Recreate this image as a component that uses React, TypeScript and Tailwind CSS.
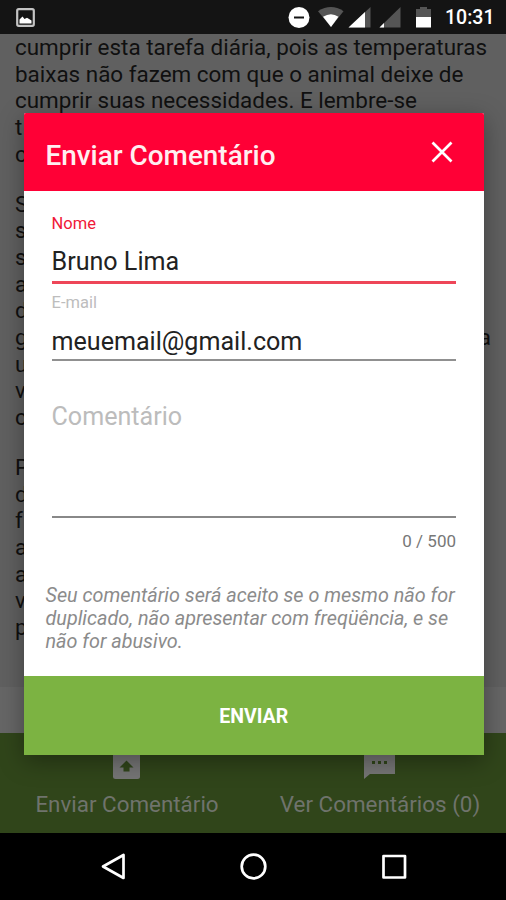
import React from "react";

const opening = [
  "cumprir esta tarefa diária, pois as temperaturas",
  "baixas não fazem com que o animal deixe de",
  "cumprir suas necessidades. E lembre-se",
  "t",
  "c",
];
const middle = ["S", "s", "s", "a", "d", "g", "u", "v", "c"];
const ending = ["P", "d", "f", "a", "a", "v", "p"];

function Paragraph({ lines, trailing }: { lines: string[]; trailing?: number }) {
  return (
    <div className="mb-[23.5px]">
      {lines.map((line, i) => (
        <div key={i} className="flex h-[26.65px] items-center justify-between whitespace-nowrap leading-none">
          <span>{line}</span>
          {i === trailing && <span>a</span>}
        </div>
      ))}
    </div>
  );
}

function StatusBar() {
  return (
    <header className="flex h-[34px] shrink-0 items-center justify-between bg-[#141414] pr-[11.5px] pl-[16px]">
      <svg width="19" height="19" viewBox="0 0 19 19">
        <rect x="1.2" y="1.2" width="16.6" height="16.6" rx="1.5" fill="none" stroke="#c4c4c4" strokeWidth="2.2" />
        <path d="M3.5 15.5V11.5L6.5 8.5L8.5 11L11 9.8L15.5 12.5V15.5Z" fill="#fff" />
      </svg>
      <div className="flex items-center">
        <svg width="130" height="24" viewBox="0 0 130 24">
          <circle cx="11" cy="12.5" r="10.5" fill="#fff" />
          <rect x="6" y="11.5" width="10" height="2" fill="#141414" />
          <path d="M30 6.2Q43 -2 55.5 6.2L43 22Z" fill="#555" />
          <path d="M35 11.8Q43 6.5 50.5 11.8L43 22Z" fill="#fff" />
          <path d="M60.5 22.5L82.5 2V22.5Z" fill="#555" />
          <path d="M60.5 22.5L77 7V22.5Z" fill="#fff" />
          <path d="M91.5 22.5L112.5 2V22.5Z" fill="#555" />
          <path d="M91.5 22.5L96 18V22.5Z" fill="#fff" />
        </svg>
        <svg width="15" height="24" viewBox="0 0 15 24" className="-ml-[2px]">
          <path d="M0 4H4V2H11V4H15V12H0Z" fill="#555" />
          <rect y="12" width="15" height="10.5" fill="#fff" />
        </svg>
        <span className="ml-[14px] pt-[1px] text-[19.5px] leading-none font-medium text-white">10:31</span>
      </div>
    </header>
  );
}

function Field({ label, value, active }: { label: string; value: string; active?: boolean }) {
  return (
    <label className="block h-[79px]">
      <span className={"block h-[20px] text-[16.5px] leading-[20px] " + (active ? "text-[#f01838]" : "text-[#bdbdbd]")}>{label}</span>
      <span
        className={
          "flex items-center text-[25.1px] leading-none text-[#222] " +
          (active ? "h-[50px] border-b-[3px] border-[#ee4658] pt-[10px]" : "h-[48.5px] border-b-2 border-[#909090] pt-[11px]")
        }
      >
        {value}
      </span>
    </label>
  );
}

function Dialog() {
  return (
    <section className="absolute top-[112.5px] left-[23.5px] flex h-[642px] w-[460.5px] flex-col overflow-hidden rounded-t-[2px] bg-white shadow-[0_6px_24px_rgba(0,0,0,0.35)]">
      <header className="flex h-[78px] shrink-0 items-center justify-between bg-[#ff0036] pr-[31px] pl-[22px] text-white">
        <h1 className="pt-[8px] text-[27.9px] leading-none font-medium text-[#ffeef0]">Enviar Comentário</h1>
        <svg width="22" height="22" viewBox="0 0 22 22" stroke="#fff" strokeWidth="2.7">
          <path d="M1.5 1.5L20.5 20.5M20.5 1.5L1.5 20.5" />
        </svg>
      </header>
      <form className="flex flex-1 flex-col px-[28px] pt-[23px]">
        <Field label="Nome" value="Bruno Lima" active />
        <Field label="E-mail" value="meuemail@gmail.com" />
        <div className="h-[146px] border-b-2 border-[#888] pt-[32px] text-[25.1px] leading-none text-[#bcbcbc]">
          <span className="block">Comentário</span>
        </div>
        <p className="pt-[13px] text-right text-[17px] leading-[20px] text-[#777]">0 / 500</p>
        <p className="mt-[33px] -ml-[6px] text-[19.8px] leading-[23px] whitespace-nowrap text-[#8b8b8b] italic">
          Seu comentário será aceito se o mesmo não for
          <br />
          duplicado, não apresentar com freqüência, e se
          <br />
          não for abusivo.
        </p>
      </form>
      <button type="button" className="h-[78.5px] shrink-0 bg-[#7cb342] pt-[2px] text-[19.5px] font-bold text-white">
        ENVIAR
      </button>
    </section>
  );
}

export default function App() {
  return (
    <div className="relative flex h-[900px] w-[506px] flex-col overflow-hidden bg-black font-['Roboto',sans-serif]">
      <StatusBar />
      <main className="flex h-[699px] shrink-0 flex-col bg-[#606060] text-[22.45px] text-[#101010]">
        <article className="h-[653px] shrink-0 px-[15px]">
          <Paragraph lines={opening} />
          <Paragraph lines={middle} trailing={5} />
          <Paragraph lines={ending} />
        </article>
        <div className="flex-1 bg-[#666]" />
      </main>
      <nav className="flex h-[100px] shrink-0 bg-[#30451a] text-[22.4px] text-[#6f736c]">
        <div className="flex w-[254px] flex-col items-center pt-[17.5px]">
          <svg width="27" height="28" viewBox="0 0 27 28" className="mr-[1px]">
            <rect width="27" height="28" rx="2.5" fill="#757575" />
            <path d="M13.5 9.5L20.5 16.5H16.5V20.5H10.5V16.5H6.5Z" fill="#30451a" />
          </svg>
          <span className="mt-[14px] leading-none whitespace-nowrap">Enviar Comentário</span>
        </div>
        <div className="flex w-[252px] flex-col items-center pt-[17.5px]">
          <svg width="31" height="28" viewBox="0 0 31 28" className="mr-[1px]">
            <path d="M0 0H31V23H6L0 28Z" fill="#757575" />
            <path d="M8 10H11V13H8ZM14 10H17V13H14ZM20 10H23V13H20Z" fill="#30451a" />
          </svg>
          <span className="mt-[14px] leading-none whitespace-nowrap">Ver Comentários (0)</span>
        </div>
      </nav>
      <footer className="flex h-[67px] shrink-0 items-center bg-black">
        <svg width="506" height="67" viewBox="0 0 506 67" fill="none" stroke="#fff" strokeWidth="2.7" strokeLinejoin="round">
          <path d="M103 33.5L123.500 22V45Z" />
          <circle cx="253.500" cy="33.500" r="11.800" />
          <rect x="383.500" y="23" width="21.500" height="21.500" />
        </svg>
      </footer>
      <Dialog />
    </div>
  );
}
